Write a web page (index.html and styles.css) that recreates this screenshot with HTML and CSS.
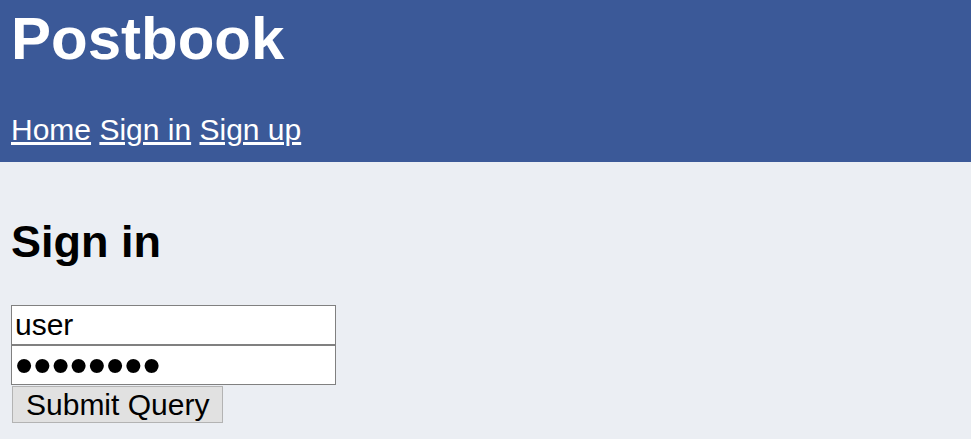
FILE: index.html
```html
<!DOCTYPE html>
<html>
<head>
<meta charset="utf-8">
<title>Postbook</title>
<link rel="stylesheet" href="styles.css">
</head>
<body>
<header class="site-header">
  <h1 class="brand">Postbook</h1>
  <nav class="nav">
    <a href="#">Home</a>
    <a href="#">Sign in</a>
    <a href="#">Sign up</a>
  </nav>
</header>
<main class="content">
  <h2 class="page-title">Sign in</h2>
  <form class="signin-form">
    <input class="field" type="text" value="user">
    <input class="field field-password" type="password" value="password">
    <button class="submit" type="button">Submit Query</button>
  </form>
</main>
</body>
</html>
```
FILE: styles.css
```css
html, body {
  margin: 0;
  padding: 0;
}
body {
  background: #ebeef3;
  font-family: "Liberation Sans", Arial, sans-serif;
  font-size: 30px;
  color: #000;
}
.site-header {
  background: #3b5998;
  color: #fff;
  padding: 4px 11px 15px;
}
.brand {
  margin: 0 0 40px;
  font-size: 60px;
  font-weight: bold;
  line-height: normal;
}
.nav a {
  color: #fff;
  text-decoration: underline;
}
.content {
  padding: 17px 11px 0;
}
.page-title {
  margin: 37px 0 37px;
  font-size: 45px;
  font-weight: bold;
  line-height: normal;
}
.signin-form {
  display: flex;
  flex-direction: column;
  align-items: flex-start;
}
.field {
  box-sizing: border-box;
  width: 325px;
  height: 40px;
  margin: 0;
  padding: 1px 3px;
  border: 1px solid #808080;
  background: #fff;
  font-family: "Liberation Sans", Arial, sans-serif;
  font-size: 30px;
  color: #000;
  outline: none;
}
.field-password {
  font-size: 52px;
  padding: 0 3px;
  line-height: 1;
}
.submit {
  box-sizing: border-box;
  margin: 1px 0 0 1px;
  height: 37px;
  padding: 0 13px;
  border: 1px solid #b3b3b3;
  background: #e1e1e1;
  font-family: "Liberation Sans", Arial, sans-serif;
  font-size: 30px;
  color: #000;
  line-height: 1;
}
```
